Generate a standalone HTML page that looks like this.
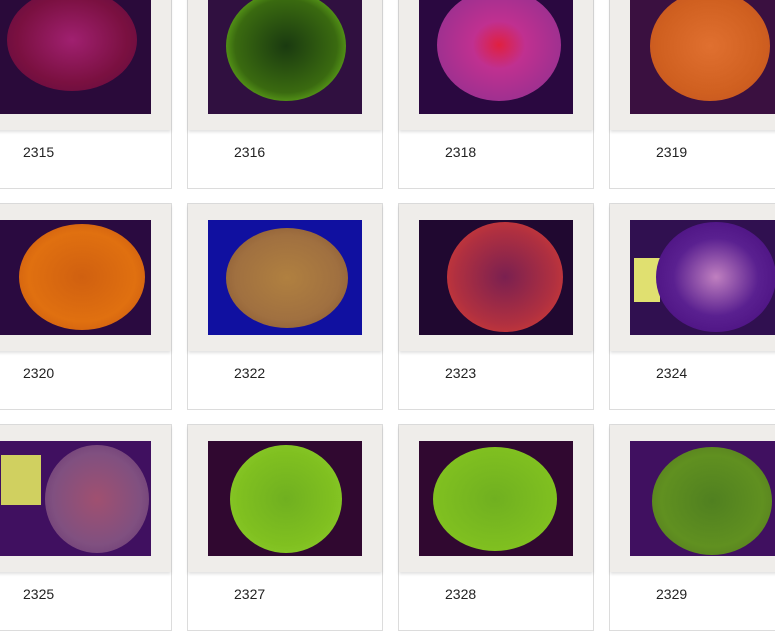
<!DOCTYPE html>
<html><head><style>
body{margin:0;width:775px;height:625px;overflow:hidden;background:#fff;font-family:"Liberation Sans",sans-serif;position:relative}
.c{position:absolute;width:194px;height:205px;border:1px solid #dcdcdc;background:#fff}
.g{position:absolute;left:0;top:0;width:194px;height:147px;background:#efedea;box-shadow:0 2px 3px rgba(0,0,0,.12)}
.i{position:absolute;left:20px;top:16px;width:154px;height:115px;overflow:hidden}
.d{position:absolute;left:22px;top:6px;width:110px;height:102px;border-radius:50%}
.t{position:absolute;left:46px;top:161px;font-size:14px;color:#222}
</style></head><body>
<div class="c" style="left:-24px;top:-18px"><div class="g"><div class="i" style="background:#2a0a3a"><div class="d" style="left:10px;top:-10px;width:130px;background:radial-gradient(#a02070,#7a1040 60%,#5a0a40)"></div></div></div><div class="t">2315</div></div>
<div class="c" style="left:187px;top:-18px"><div class="g"><div class="i" style="background:#301040"><div class="d" style="left:18px;top:-8px;width:120px;height:110px;background:radial-gradient(#1a3a10,#3a6a10 60%,#7ad020 90%)"></div></div></div><div class="t">2316</div></div>
<div class="c" style="left:398px;top:-18px"><div class="g"><div class="i" style="background:#2a0840"><div class="d" style="left:18px;top:-10px;width:124px;height:112px;background:radial-gradient(#e02040,#c03090 30%,#a03090 70%,#7a2090)"></div></div></div><div class="t">2318</div></div>
<div class="c" style="left:609px;top:-18px"><div class="g"><div class="i" style="background:#3a1040"><div class="d" style="left:20px;top:-8px;width:120px;height:110px;background:radial-gradient(#e07030,#d06020 60%,#c05020)"></div></div></div><div class="t">2319</div></div>
<div class="c" style="left:-24px;top:203px"><div class="g"><div class="i" style="background:#2a0a40"><div class="d" style="left:22px;top:4px;width:126px;height:106px;background:radial-gradient(#d06010,#e07010 60%,#c05010)"></div></div></div><div class="t">2320</div></div>
<div class="c" style="left:187px;top:203px"><div class="g"><div class="i" style="background:#1010a0"><div class="d" style="left:18px;top:8px;width:122px;height:100px;background:radial-gradient(#b08040,#a07040 60%,#805030)"></div></div></div><div class="t">2322</div></div>
<div class="c" style="left:398px;top:203px"><div class="g"><div class="i" style="background:#200830"><div class="d" style="left:28px;top:2px;width:116px;height:110px;background:radial-gradient(#7a2050,#b03040 60%,#e04030)"></div></div></div><div class="t">2323</div></div>
<div class="c" style="left:609px;top:203px"><div class="g"><div class="i" style="background:#301050"><div style="position:absolute;left:4px;top:38px;width:26px;height:44px;background:#e0e070"></div><div class="d" style="left:26px;top:2px;width:120px;height:110px;background:radial-gradient(#c080c0,#5a2090 50%,#4a1080 85%,#e04020)"></div></div></div><div class="t">2324</div></div>
<div class="c" style="left:-24px;top:424px"><div class="g"><div class="i" style="background:#401060"><div style="position:absolute;left:4px;top:14px;width:40px;height:50px;background:#d0d060"></div><div class="d" style="left:48px;top:4px;width:104px;height:108px;background:radial-gradient(#a05070,#805080 60%,#603070)"></div></div></div><div class="t">2325</div></div>
<div class="c" style="left:187px;top:424px"><div class="g"><div class="i" style="background:#300830"><div class="d" style="left:22px;top:4px;width:112px;height:108px;background:radial-gradient(#70b020,#80c020 60%,#90d030)"></div></div></div><div class="t">2327</div></div>
<div class="c" style="left:398px;top:424px"><div class="g"><div class="i" style="background:#300830"><div class="d" style="left:14px;top:6px;width:124px;height:104px;background:radial-gradient(#70b020,#80c020 70%,#a0d060)"></div></div></div><div class="t">2328</div></div>
<div class="c" style="left:609px;top:424px"><div class="g"><div class="i" style="background:#401060"><div class="d" style="left:22px;top:6px;width:120px;height:108px;background:radial-gradient(#508020,#609020 60%,#507020)"></div></div></div><div class="t">2329</div></div>
</body></html>
